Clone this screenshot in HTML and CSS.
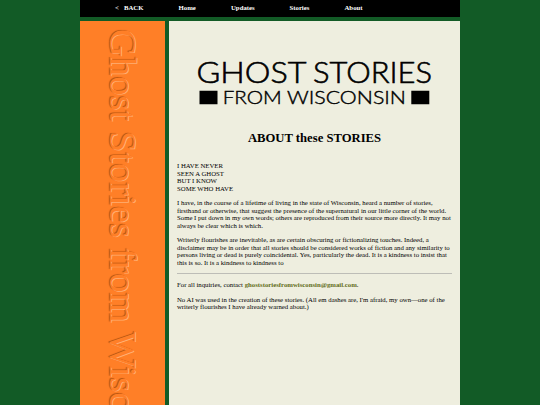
FILE: index.html
```html
<!DOCTYPE html>
<html lang="en">
<head>
<meta charset="utf-8">
<title>Ghost Stories from Wisconsin</title>
<link rel="stylesheet" href="styles.css">
</head>
<body>
<div class="page">
  <nav class="nav"><a class="back">&lt;&nbsp;&nbsp; BACK</a><a class="home">Home</a><a class="updates">Updates</a><a class="stories">Stories</a><a class="about">About</a></nav>
  <div class="columns">
    <aside class="side"><div class="side-title">Ghost Stories from Wisconsin</div></aside>
    <main class="content">
      <svg class="logo" viewBox="0 0 240 50" width="240" height="50">
        <g class="lettering">
          <text class="large" x="2.500" y="27" textLength="110" lengthAdjust="spacingAndGlyphs">GHOST</text>
          <text class="large" x="119" y="27" textLength="119" lengthAdjust="spacingAndGlyphs">STORIES</text>
          <text class="small" x="28.700" y="47.500" textLength="59" lengthAdjust="spacingAndGlyphs">FROM</text>
          <text class="small" x="93" y="47.500" textLength="119" lengthAdjust="spacingAndGlyphs">WISCONSIN</text>
        </g>
        <path d="M5.500 34.700h18v13.500h-18zM217.300 34.700h18v13.500h-18z"/>
      </svg>
      <h1>ABOUT these STORIES</h1>
      <p>I HAVE NEVER<br>SEEN A GHOST<br>BUT I KNOW<br>SOME WHO HAVE</p>
      <p>I have, in the course of a lifetime of living in the state of Wisconsin, heard a number of stories,<br>firsthand or otherwise, that suggest the presence of the supernatural in our little corner of the world.<br>Some I put down in my own words; others are reproduced from their source more directly. It may not<br>always be clear which is which.</p>
      <p>Writerly flourishes are inevitable, as are certain obscuring or fictionalizing touches. Indeed, a<br>disclaimer may be in order that all stories should be considered works of fiction and any similarity to<br>persons living or dead is purely coincidental. Yes, particularly the dead. It is a kindness to insist that<br>this is so. It is a kindness to kindness to</p>
      <hr>
      <p>For all inquiries, contact <a class="mail">ghoststoriesfromwisconsin@gmail.com</a>.</p>
      <p>No AI was used in the creation of these stories. (All em dashes are, I'm afraid, my own—one of the<br>writerly flourishes I have already warned about.)</p>
    </main>
  </div>
</div>
</body>
</html>
```
FILE: styles.css
```css
body {
  margin: 0;
  height: 405px;
  overflow: hidden;
  background: #125b26;
  font-family: "Liberation Serif", serif;
  font-size: 6.76px;
  line-height: 7.5px;
  color: #000;
}
.page { width: 380px; margin: 0 auto; }
.nav {
  display: grid;
  grid-template-columns: 63.500px 52.500px 58.500px 55px 1fr;
  height: 17px;
  box-sizing: border-box;
  padding: 4px 0 0 35px;
  background: #000;
  color: #fff;
  font-weight: bold;
}
.columns { display: flex; gap: 4px; margin-top: 4px; height: 384px; }
.side { width: 85px; background: #ff7f27; overflow: hidden; }
.side-title {
  writing-mode: vertical-rl;
  margin: 8px 0 0 22px;
  line-height: 42px;
  font-size: 38.600px;
  white-space: nowrap;
  color: #ff7f27;
  -webkit-text-stroke: 1.5px #ff7f27;
  paint-order: stroke fill;
  text-shadow: 0.6px -0.7px 0.6px #ffb074, -0.6px 0.7px 0.7px #b85510;
}
.content {
  width: 291px;
  box-sizing: border-box;
  padding: 35px 8px 0;
  background: #eeeedf;
  white-space: nowrap;
}
.logo { display: block; margin-left: 17px; }
.lettering { font-family: Lato, sans-serif; font-weight: 300; stroke: #000; stroke-width: 0.6px; }
.large { font-size: 29.300px; }
.small { font-size: 18.200px; stroke-width: 0.4px; }
h1 { margin: 25px 0 16px; font-size: 12.67px; line-height: 15px; text-align: center; }
p { margin: 0 0 7px; }
hr { margin: 0 0 7px; border: 0; height: 1px; background: #bdbdb7; }
.mail { color: #626d1a; font-weight: bold; }
```
